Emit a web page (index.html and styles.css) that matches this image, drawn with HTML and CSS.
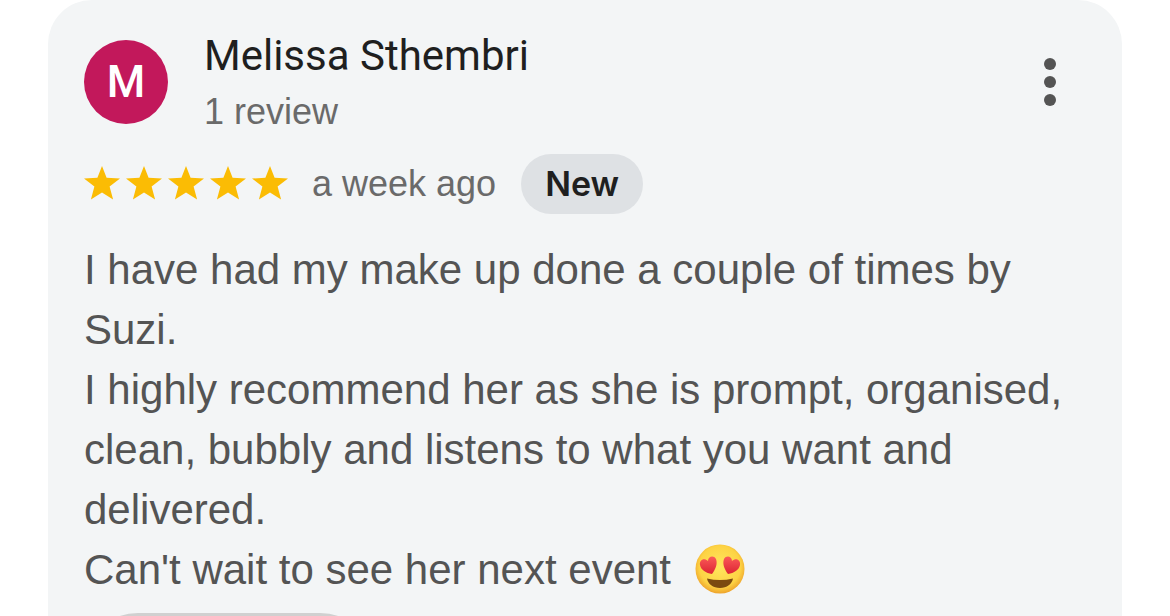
FILE: index.html
```html
<!DOCTYPE html>
<html lang="en">

<head>
  <meta charset="UTF-8" />
  <meta name="viewport" content="width=device-width, initial-scale=1.0" />
  <title>Review by Melissa Sthembri</title>
  <link rel="stylesheet" href="styles.css">
</head>

<body>
  <svg class="defs" aria-hidden="true">
    <symbol id="star" viewBox="0 0 36 34">
      <path d="M18 0 L22.6 11.8 L36 12.5 L25.6 20.6 L29.1 33.6 L18 26.4 L6.9 33.6 L10.4 20.6 L0 12.5 L13.4 11.8 Z" />
    </symbol>
  </svg>

  <article class="review">
    <header class="author">
      <div class="avatar">M</div>
      <div class="who">
        <h2>Melissa Sthembri</h2>
        <p>1 review</p>
      </div>
      <button class="menu" aria-label="More options">
        <svg viewBox="0 0 12 48">
          <circle cx="6" cy="6" r="6" />
          <circle cx="6" cy="24" r="6" />
          <circle cx="6" cy="42" r="6" />
        </svg>
      </button>
    </header>

    <div class="meta">
      <div class="stars" role="img" aria-label="5 stars">
        <svg><use href="#star" /></svg>
        <svg><use href="#star" /></svg>
        <svg><use href="#star" /></svg>
        <svg><use href="#star" /></svg>
        <svg><use href="#star" /></svg>
      </div>
      <span class="date">a week ago</span>
      <span class="badge">New</span>
    </div>

    <div class="text">
      <p>I have had my make up done a couple of times by Suzi.</p>
      <p>I highly recommend her as she is prompt, organised, clean, bubbly and listens to what you want and delivered.</p>
      <p>Can't wait to see her next event
        <svg class="emoji" viewBox="0 0 50 50" role="img" aria-label="heart eyes">
          <defs>
            <radialGradient id="face" cx="50%" cy="45%" r="56%">
              <stop offset="0" stop-color="#ffe65e" />
              <stop offset="0.75" stop-color="#fdd344" />
              <stop offset="1" stop-color="#eda02a" />
            </radialGradient>
            <linearGradient id="heart" x1="0" y1="0" x2="0" y2="1">
              <stop offset="0" stop-color="#fb5a58" />
              <stop offset="1" stop-color="#dc2433" />
            </linearGradient>
          </defs>
          <circle cx="25" cy="25" r="24.5" fill="url(#face)" />
          <path fill="url(#heart)" d="M17 30 C11 29 6 26 5 21 C4 16 9 13 13 17 C13 12 19 11 21 15 C23 20 20 26 17 30 Z" />
          <path fill="url(#heart)" d="M33 30 C39 29 44 26 45 21 C46 16 41 13 37 17 C37 12 31 11 29 15 C27 20 30 26 33 30 Z" />
          <path fill="#7b4a10" d="M12 34.500 Q25 37.500 38 34.500 C37 40 32 44 25 44 C18 44 13 40 12 34.500 Z" />
        </svg>
      </p>
    </div>

    <button class="action" aria-label="Like"></button>
  </article>
</body>

</html>
```

FILE: styles.css
```css
* {
  box-sizing: border-box;
}

body {
  margin: 0;
  height: 100vh;
  overflow: hidden;
  background: #fff;
  font-family: "Liberation Sans", Arial, sans-serif;
  color: #545454;
}

h2,
p {
  margin: 0;
}

.defs {
  display: none;
}

.review {
  margin: 0 48px;
  padding: 26px 36px;
  background: #f3f5f6;
  border-radius: 44px;
}

.author {
  display: flex;
  align-items: center;
}

.avatar {
  display: flex;
  align-items: center;
  justify-content: center;
  width: 84px;
  height: 84px;
  border-radius: 50%;
  background: #c2185b;
  color: #fff;
  font: 500 44px Roboto, sans-serif;
}

.who {
  flex: 1;
  margin-left: 36px;
}

.who h2 {
  font: 400 42px/60px Roboto, sans-serif;
  color: #1f1f1f;
}

.who p {
  font-size: 36px;
  line-height: 52px;
  color: #6a6a6a;
}

.menu {
  display: flex;
  justify-content: center;
  width: 72px;
  padding: 0;
  border: none;
  background: none;
  cursor: pointer;
}

.menu svg {
  width: 12px;
  height: 48px;
  fill: #545454;
}

.meta {
  display: flex;
  align-items: center;
  margin-top: 16px;
}

.stars {
  display: flex;
  gap: 6px;
  padding-bottom: 2px;
}

.stars svg {
  width: 36px;
  height: 34px;
  fill: #fbbc04;
}

.date {
  margin-left: 24px;
  font-size: 36px;
  color: #6a6a6a;
}

.badge {
  margin-left: 25px;
  padding: 0 24px;
  border-radius: 30px;
  background: #dee1e4;
  color: #1f1f1f;
  font: 600 34px/60px Inter, sans-serif;
}

.text {
  margin-top: 26px;
  font-size: 42px;
  line-height: 60px;
}

.emoji {
  width: 50px;
  height: 50px;
  margin: -8px 0 0 12px;
  vertical-align: -10px;
}

.action {
  display: block;
  width: 290px;
  height: 108px;
  margin-top: 13px;
  border: 3px solid #d0d0d0;
  border-radius: 54px;
  background: none;
}
```
